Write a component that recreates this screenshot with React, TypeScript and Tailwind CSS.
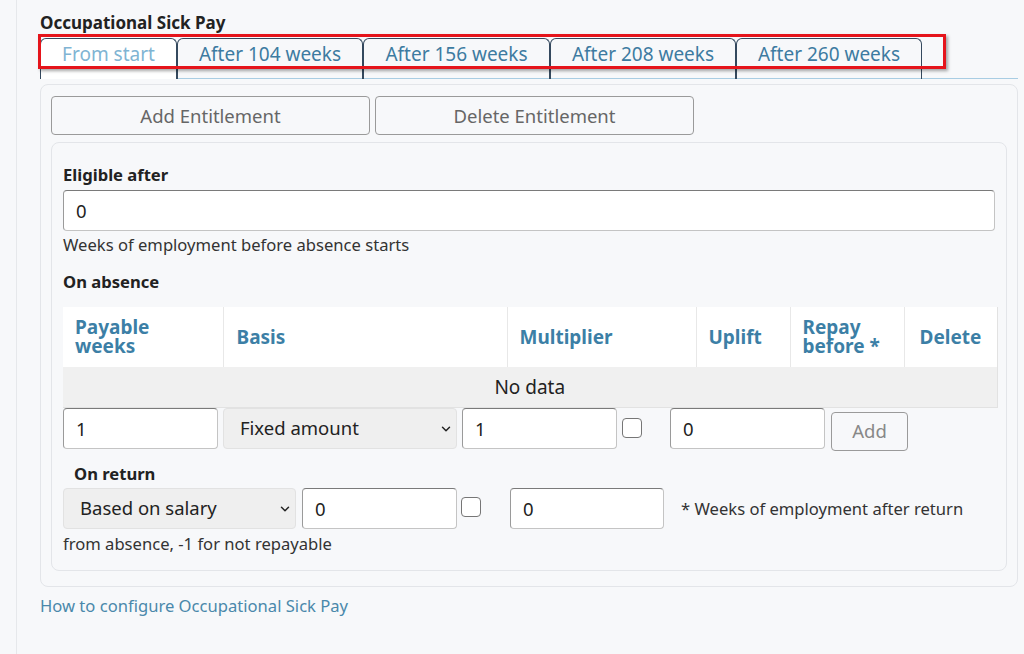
import { ChevronDown } from 'lucide-react';

const tabs = [
  { label: 'From start', w: 'w-[137px]', active: true },
  { label: 'After 104 weeks', w: 'w-[186px]' },
  { label: 'After 156 weeks', w: 'w-[187px]' },
  { label: 'After 208 weeks', w: 'w-[186px]' },
  { label: 'After 260 weeks', w: 'w-[186px]' },
];

const inputCls =
  'h-[41px] rounded-[4px] border border-[#c4c4c4] border-t-[#7a7a7a] border-l-[#9a9a9a] bg-white px-[12px] text-[18.5px] text-[#222] outline-none';

function Select({ value, w }: { value: string; w: string }) {
  return (
    <div className={`relative ${w}`}>
      <select
        defaultValue={value}
        className="h-[41px] w-full appearance-none rounded-[4px] border border-[#e2e2e2] bg-[#efefef] pl-[16px] text-[18.5px] text-[#222] outline-none"
      >
        <option>{value}</option>
      </select>
      <ChevronDown className="pointer-events-none absolute right-[4px] top-[14px] h-[14px] w-[14px] text-[#222]" strokeWidth={2.5} />
    </div>
  );
}

function Check({ className = '' }: { className?: string }) {
  return (
    <input
      type="checkbox"
      className={`h-[20px] w-[20px] appearance-none rounded-[4px] border-[1.5px] border-[#767676] bg-white ${className}`}
    />
  );
}

export default function App() {
  return (
    <div className="relative min-h-screen bg-[#f7f8fa] font-['Noto_Sans',sans-serif] text-[16.6px] text-[#333]">
      <div className="ml-[16px] min-h-screen border-l border-[#e6e8eb] pl-[23px] pr-[6px] pt-[11px]">
        <h2 className="text-[17px] font-bold leading-[24px] text-[#222]">Occupational Sick Pay</h2>

        {/* Tabs */}
        <div className="mt-[3px] flex border-b border-[#a9cde3]">
          {tabs.map((t) => (
            <div
              key={t.label}
              className={`${t.w} -mb-px flex h-[41px] justify-center rounded-t-[6px] border border-b-0 border-[#34495e] pt-[2px] text-[19px] leading-[26px] ${
                t.active ? 'bg-white text-[#80b4d3]' : 'text-[#3d7ba1]'
              }`}
            >
              {t.label}
            </div>
          ))}
        </div>

        {/* Outer panel */}
        <div className="mt-[5px] rounded-[8px] border border-[#e3e5e9] px-[10px] pb-[15px] pt-[11px]">
          <div className="flex gap-[5px]">
            <button className="h-[39px] w-[319px] rounded-[4px] border border-[#9a9a9a] text-[18.5px] text-[#666]">
              Add Entitlement
            </button>
            <button className="h-[39px] w-[319px] rounded-[4px] border border-[#9a9a9a] text-[18.5px] text-[#666]">
              Delete Entitlement
            </button>
          </div>

          {/* Inner panel */}
          <div className="mt-[7px] rounded-[8px] border border-[#e3e5e9] px-[11px] pb-[14px] pt-[20px]">
            <div className="font-bold leading-[24px] text-[#222]">Eligible after</div>
            <input defaultValue="0" className={`${inputCls} mt-[3px] h-[40px] w-full`} />
            <div className="mt-[2px] leading-[24px]">Weeks of employment before absence starts</div>

            <div className="mt-[13px] font-bold leading-[24px] text-[#222]">On absence</div>

            <table className="mt-[13px] w-[934px] table-fixed border-collapse">
              <colgroup>
                <col className="w-[160px]" />
                <col className="w-[284px]" />
                <col className="w-[189px]" />
                <col className="w-[94px]" />
                <col className="w-[114px]" />
                <col className="w-[93px]" />
              </colgroup>
              <thead>
                <tr className="h-[60px] bg-white text-left text-[19px] font-bold leading-[19px] text-[#3c7fa6]">
                  <th className="border-r border-[#e8e8e8] pl-[12px]">Payable<br />weeks</th>
                  <th className="border-r border-[#e8e8e8] pl-[13px]">Basis</th>
                  <th className="border-r border-[#e8e8e8] pl-[12px]">Multiplier</th>
                  <th className="border-r border-[#e8e8e8] pl-[12px]">Uplift</th>
                  <th className="border-r border-[#e8e8e8] pl-[12px]">Repay<br />before *</th>
                  <th className="border-r border-[#e2e2e2] text-center">Delete</th>
                </tr>
              </thead>
              <tbody>
                <tr className="h-[40px] bg-[#f0f0f0]">
                  <td colSpan={6} className="border-b border-r border-[#e2e2e2] text-center text-[19px] text-[#222]">
                    No data
                  </td>
                </tr>
              </tbody>
            </table>

            <div className="flex items-start">
              <input defaultValue="1" className={`${inputCls} w-[155px]`} />
              <div className="ml-[5px]">
                <Select value="Fixed amount" w="w-[234px]" />
              </div>
              <input defaultValue="1" className={`${inputCls} ml-[5px] w-[155px]`} />
              <Check className="ml-[5px] mt-[10px]" />
              <input defaultValue="0" className={`${inputCls} ml-[28px] w-[155px]`} />
              <button className="ml-[6px] mt-[4px] h-[39px] w-[77px] rounded-[4px] border border-[#9a9a9a] text-[18.5px] text-[#888]">
                Add
              </button>
            </div>

            <div className="ml-[11px] mt-[11px] font-bold leading-[24px] text-[#222]">On return</div>
            <div className="mt-[2px] flex items-start">
              <Select value="Based on salary" w="w-[233px]" />
              <input defaultValue="0" className={`${inputCls} ml-[6px] w-[155px]`} />
              <Check className="ml-[4px] mt-[9px]" />
              <input defaultValue="0" className={`${inputCls} ml-[29px] w-[154px]`} />
              <span className="ml-[17px] mt-[9px] leading-[24px]">* Weeks of employment after return</span>
            </div>
            <div className="mt-[3px] leading-[24px]">from absence, -1 for not repayable</div>
          </div>
        </div>

        <a className="mt-[7px] block leading-[24px] text-[#4a88ab]">How to configure Occupational Sick Pay</a>
      </div>

      {/* red annotation box around the tabs */}
      <div className="pointer-events-none absolute left-[38px] top-[34px] h-[35px] w-[908px] border-[3px] border-[#e5141b] shadow-[2px_2px_3px_rgba(0,0,0,0.35)]" />
    </div>
  );
}
